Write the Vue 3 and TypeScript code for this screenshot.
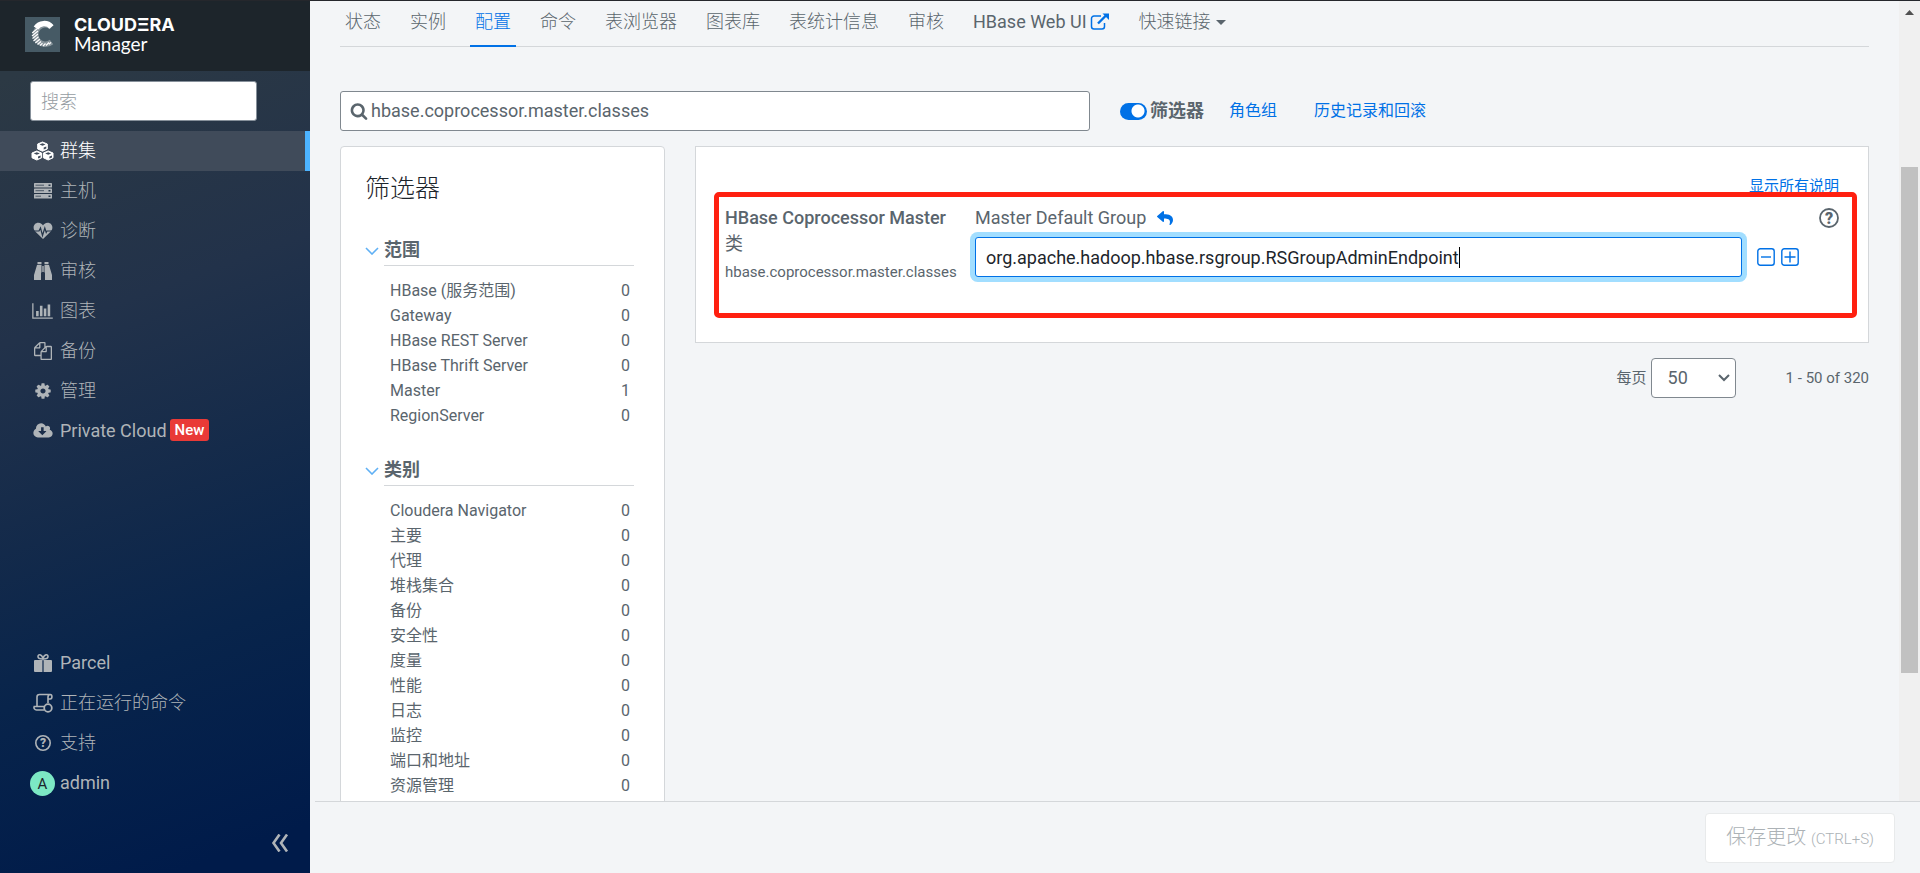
<script setup lang="ts">
import { ref } from 'vue'

interface NavItem {
  label: string
  icon: string
  active?: boolean
  badge?: string
}

interface FilterGroup {
  title: string
  rows: { name: string; count: number }[]
}

const mainNav: NavItem[] = [
  { label: '群集', icon: 'cubes', active: true },
  { label: '主机', icon: 'hosts' },
  { label: '诊断', icon: 'heart' },
  { label: '审核', icon: 'binoculars' },
  { label: '图表', icon: 'chart' },
  { label: '备份', icon: 'copy' },
  { label: '管理', icon: 'cog' },
  { label: 'Private Cloud', icon: 'cloud', badge: 'New' },
]

const footNav: NavItem[] = [
  { label: 'Parcel', icon: 'gift' },
  { label: '正在运行的命令', icon: 'scroll' },
  { label: '支持', icon: 'help' },
  { label: 'admin', icon: 'avatar' },
]

const tabs = ['状态', '实例', '配置', '命令', '表浏览器', '图表库', '表统计信息', '审核']
const activeTab = ref('配置')

const isLatin = (text: string) => /^[A-Za-z]/.test(text)

const zero = (names: string[]) => names.map((name) => ({ name, count: 0 }))

const groups: FilterGroup[] = [
  {
    title: '范围',
    rows: [
      ...zero(['HBase (服务范围)', 'Gateway', 'HBase REST Server', 'HBase Thrift Server']),
      { name: 'Master', count: 1 },
      { name: 'RegionServer', count: 0 },
    ],
  },
  {
    title: '类别',
    rows: zero([
      'Cloudera Navigator', '主要', '代理', '堆栈集合', '备份', '安全性',
      '度量', '性能', '日志', '监控', '端口和地址', '资源管理',
    ]),
  },
]

const navQuery = ref('')
const query = ref('hbase.coprocessor.master.classes')
const filtersOn = ref(true)
const endpoint = ref('org.apache.hadoop.hbase.rsgroup.RSGroupAdminEndpoint')
const perPage = ref('50')
</script>

<template>
  <div class="app">
    <aside class="sidebar">
      <header class="brand">
        <svg class="brand-mark" viewBox="0 0 35 35" aria-hidden="true">
          <rect width="35" height="35" fill="#465a65" />
          <path d="M26.500 10A9.700 9.700 0 1 0 26.500 25" fill="none" stroke="#fff" stroke-width="5.500" opacity=".35" />
          <path d="M26.500 10A9.700 9.700 0 0 0 11 11" fill="none" stroke="#fff" stroke-width="5.500" />
          <path d="M7.200 16l7-6M7 19l6-5M7.500 21.500l5.500-4.500M8.500 24l5-4.200M10.300 26l4.500-3.800M12.500 27.500l3.500-3M15 28.500l2.500-2.300M18 29l2.500-2.500M21 28.500l3-3M24 27.300l2-2" stroke="#fff" stroke-width="1.200" />
        </svg>
        <div class="brand-text">
          <span class="brand-name">CLOUDΞRA</span>
          <span class="brand-product">Manager</span>
        </div>
      </header>

      <div class="nav-search">
        <input v-model="navQuery" type="text" placeholder="搜索" aria-label="搜索" />
      </div>

      <nav class="nav">
        <template v-for="(list, li) in [mainNav, footNav]" :key="li">
          <div v-if="li === 1" class="nav-space"></div>
          <a v-for="item in list" :key="item.label" href="#" class="nav-item" :class="{ active: item.active }">
            <span class="nav-icon">
              <svg v-if="item.icon === 'cubes'" width="23" height="20" viewBox="0 0 23 20">
                <g fill="currentColor" stroke="currentColor" stroke-width="1" stroke-linejoin="round">
                  <path d="M11.500 1l4.800 2v5l-4.800 2.200L6.700 8V3z" />
                  <path d="M5.800 10l4.800 2v4.800l-4.800 2.200L1 16.800V12z" />
                  <path d="M17.200 10l4.800 2v4.800l-4.800 2.200-4.800-2.200V12z" />
                </g>
                <path d="M8.500 3.500l3-1.200 3 1.200-3 1.200zM2.800 12.500l3-1.200 3 1.200-3 1.200zM14.200 12.500l3-1.200 3 1.200-3 1.200zM12.700 6.500l2.600-1.100v2l-2.600 1.200zM7 15.500l2.600-1.100v2L7 17.600zM18.400 15.500l2.600-1.100v2l-2.600 1.200z" fill="#404b5a" />
              </svg>
              <svg v-else-if="item.icon === 'hosts'" width="20" height="16" viewBox="0 0 20 16">
                <g fill="currentColor">
                  <rect x="1" y="0" width="18" height="4.500" rx=".6" />
                  <rect x="1" y="5.500" width="18" height="4.500" rx=".6" />
                  <rect x="1" y="11" width="18" height="4.500" rx=".6" />
                </g>
                <path d="M2.500 2.200H11M2.500 7.700H11M2.500 13.200H8" stroke="#4c5866" stroke-width="1" />
                <path d="M15.500 2.200h2M15.500 7.700h2M15.500 13.200h2" stroke="#26374a" stroke-width="1.500" />
              </svg>
              <svg v-else-if="item.icon === 'heart'" width="20" height="18" viewBox="0 0 20 18">
                <path d="M10 17L2 9.300C-.8 6 .8.8 5.400.8 7.700.8 9.300 2.300 10 3.400 10.700 2.300 12.300.8 14.600.8c4.600 0 6.200 5.200 3.400 8.500z" fill="currentColor" />
                <path d="M1 9h5l1.500-3 2 7.500L11.800 6l1.400 4.500L14 9h5" fill="none" stroke="#24354a" stroke-width="1.200" />
              </svg>
              <svg v-else-if="item.icon === 'binoculars'" width="20" height="20" viewBox="0 0 20 20">
                <path d="M4.500 1h4v2.200h-4zM11.500 1h4v2.200h-4zM4 4h4.500v7.500H8V19H1v-5zM16 4h-4.500v7.500h.5V19h7v-5zM9.300 5h1.400v6H9.300z" fill="currentColor" />
              </svg>
              <svg v-else-if="item.icon === 'chart'" width="21" height="18" viewBox="0 0 2048 1792">
                <path d="M640 896v512h-256v-512h256zm384-512v1024h-256v-1024h256zm1024 1152v128h-2048v-1536h128v1408h1920zm-640-896v768h-256v-768h256zm384-384v1152h-256v-1152h256z" fill="currentColor" />
              </svg>
              <svg v-else-if="item.icon === 'copy'" width="18" height="18" viewBox="0 0 1792 1792">
                <path d="M1696 384q40 0 68 28t28 68v1216q0 40-28 68t-68 28h-960q-40 0-68-28t-28-68v-288h-544q-40 0-68-28t-28-68v-672q0-40 20-88t48-76l408-408q28-28 76-48t88-20h416q40 0 68 28t28 68v328q68-40 128-40h416zm-544 213l-299 299h299v-299zm-640-384l-299 299h299v-299zm196 647l316-316v-416h-384v416q0 40-28 68t-68 28h-416v640h512v-256q0-40 20-88t48-76zm956 804v-1152h-384v416q0 40-28 68t-68 28h-416v640h896z" fill="currentColor" />
              </svg>
              <svg v-else-if="item.icon === 'cog'" width="18" height="18" viewBox="0 0 1792 1792">
                <path d="M1152 896q0-106-75-181t-181-75-181 75-75 181 75 181 181 75 181-75 75-181zm512-109v222q0 12-8 23t-20 13l-185 28q-19 54-39 91 35 50 107 138 10 12 10 25t-9 23q-27 37-99 108t-94 71q-12 0-26-9l-138-108q-44 23-91 38-16 136-29 186-7 28-36 28h-222q-14 0-24.500-8.500t-11.500-21.500l-28-184q-49-16-90-37l-141 107q-10 9-25 9-14 0-25-11-126-114-165-168-7-10-7-23 0-12 8-23 15-21 51-66.500t54-70.500q-27-50-41-99l-183-27q-13-2-21-12.500t-8-23.500v-222q0-12 8-23t19-13l186-28q14-46 39-92-40-57-107-138-10-12-10-24 0-10 9-23 26-36 98.500-107.500t94.500-71.500q13 0 26 10l138 107q44-23 91-38 16-136 29-186 7-28 36-28h222q14 0 24.500 8.500t11.500 21.500l28 184q49 16 90 37l142-107q9-9 24-9 13 0 25 10 129 119 165 170 7 8 7 22 0 12-8 23-15 21-51 66.500t-54 70.500q26 50 41 98l183 28q13 2 21 12.500t8 23.500z" fill="currentColor" />
              </svg>
              <svg v-else-if="item.icon === 'cloud'" width="20" height="18" viewBox="0 0 1920 1792">
                <path d="M1280 928q0-14-9-23t-23-9h-224v-352q0-13-9.500-22.500t-22.500-9.500h-192q-13 0-22.500 9.500t-9.500 22.500v352h-224q-13 0-22.500 9.500t-9.500 22.500q0 14 9 23l352 352q9 9 23 9t23-9l351-351q10-12 10-24zm640 224q0 159-112.500 271.500t-271.500 112.500h-1088q-185 0-316.500-131.500t-131.500-316.500q0-130 70-240t188-165q-2-30-2-43 0-212 150-362t362-150q156 0 285.500 87t188.500 231q71-62 166-62 106 0 181 75t75 181q0 76-41 138 130 31 213.500 135.500t83.500 238.500z" fill="currentColor" />
              </svg>
              <svg v-else-if="item.icon === 'gift'" width="20" height="20" viewBox="0 0 20 20">
                <path d="M1 8a1 1 0 0 1 1-1h7.400v12H2a1 1 0 0 1-1-1zM10.600 7H18a1 1 0 0 1 1 1v10a1 1 0 0 1-1 1h-7.400z" fill="currentColor" />
                <path d="M9.500 6C8 6 5 5.500 5 3.600 5 1 8.500.8 10 5.500 11.500.8 15 1 15 3.600 15 5.500 12 6 10.500 6" fill="none" stroke="currentColor" stroke-width="1.600" />
              </svg>
              <svg v-else-if="item.icon === 'scroll'" width="20" height="20" viewBox="0 0 20 20">
                <path d="M11 17H3.500a2.500 2.500 0 0 1-2.300-3.500H11M4 13.500V4a2.500 2.500 0 0 1 2.500-2.500h10.700c2.300 0 2.300 4.500 0 4.500H15V10M15 6V4a2.500 2.500 0 0 1 2.200-2.500" fill="none" stroke="currentColor" stroke-width="1.600" />
                <circle cx="15" cy="15" r="3.800" fill="none" stroke="currentColor" stroke-width="1.800" />
                <path d="M14 12.500l3.500 2.500-3.500 2.500z" fill="#08234a" />
              </svg>
              <svg v-else-if="item.icon === 'help'" width="18" height="18" viewBox="0 0 18 18">
                <circle cx="9" cy="9" r="7.200" fill="none" stroke="currentColor" stroke-width="1.600" />
                <text x="9" y="13" text-anchor="middle" class="q-small" fill="currentColor">?</text>
              </svg>
              <span v-else class="avatar">A</span>
            </span>
            <span :class="{ thin: !isLatin(item.label) }">{{ item.label }}</span>
            <span v-if="item.badge" class="badge">{{ item.badge }}</span>
          </a>
        </template>
      </nav>

      <button class="collapse" type="button" aria-label="收起">
        <svg width="18" height="18" viewBox="0 0 18 18" fill="none" stroke="currentColor" stroke-width="2.600">
          <path d="M8.500 .5L2.500 9l6 8.500M16 .5L10 9l6 8.500" />
        </svg>
      </button>
    </aside>

    <div class="workspace">
      <div class="viewport">
        <main class="content">
          <nav class="tabs">
            <a
              v-for="tab in tabs"
              :key="tab"
              href="#"
              class="tab thin"
              :class="{ current: tab === activeTab }"
              @click.prevent="activeTab = tab"
            >{{ tab }}</a>
            <a href="#" class="tab">
              HBase Web UI
              <svg class="ext" width="20" height="18" viewBox="0 0 20 18" fill="none" stroke="#0071e6">
                <path d="M11 3H4a2.500 2.500 0 0 0-2.500 2.500v8A2.500 2.500 0 0 0 4 16h8a2.500 2.500 0 0 0 2.500-2.500V10" stroke-width="1.500" />
                <path d="M8 10.500L16 2.500" stroke-width="2.400" />
                <path d="M12.500.5H19V7z" fill="#0071e6" stroke="none" />
              </svg>
            </a>
            <a href="#" class="tab thin">
              快速链接
              <svg class="caret-down" width="10" height="5" viewBox="0 0 10 5"><path d="M0 0h10L5 5z" fill="currentColor" /></svg>
            </a>
          </nav>

          <div class="toolbar">
            <label class="search-box">
              <svg width="18" height="18" viewBox="0 0 1792 1792" aria-label="搜索">
                <path d="M1216 832q0-185-131.500-316.500t-316.500-131.500-316.500 131.500-131.500 316.500 131.500 316.500 316.500 131.500 316.500-131.500 131.500-316.500zm512 832q0 52-38 90t-90 38q-54 0-90-38l-343-342q-179 124-399 124-143 0-273.500-55.500t-225-150-150-225-55.500-273.500 55.500-273.500 150-225 225-150 273.500-55.500 273.500 55.500 225 150 150 225 55.500 273.500q0 220-124 399l343 343q37 37 37 90z" fill="currentColor" />
              </svg>
              <input v-model="query" type="text" />
            </label>
            <label class="switch">
              <input v-model="filtersOn" type="checkbox" />
              <span>筛选器</span>
            </label>
            <a href="#" class="link role">角色组</a>
            <a href="#" class="link">历史记录和回滚</a>
          </div>

          <div class="columns">
            <section class="filters">
              <h2>筛选器</h2>
              <div v-for="group in groups" :key="group.title" class="group">
                <svg class="chev" width="14" height="8" viewBox="0 0 14 8">
                  <path d="M1 1l6 6 6-6" fill="none" stroke="#5fb0f5" stroke-width="1.600" />
                </svg>
                <div class="group-body">
                  <h3>{{ group.title }}</h3>
                  <ul>
                    <li v-for="row in group.rows" :key="row.name">
                      <span>{{ row.name }}</span><span>{{ row.count }}</span>
                    </li>
                  </ul>
                </div>
              </div>
            </section>

            <div class="results">
              <section class="card">
                <div class="card-top"><a href="#" class="show-all">显示所有说明</a></div>
                <div class="setting">
                  <div class="setting-name">
                    <label for="endpoint"><b>HBase Coprocessor Master</b><br />类</label>
                    <small>hbase.coprocessor.master.classes</small>
                  </div>
                  <div class="setting-value">
                    <div class="group-line">
                      <span>Master Default Group</span>
                      <button type="button" class="icon-btn" aria-label="重置">
                        <svg width="16" height="16" viewBox="0 0 512 512">
                          <path d="M8.309 189.836L184.313 37.851C199.719 24.546 224 35.347 224 56.015v80.053c160.629 1.839 288 34.032 288 186.258 0 61.441-39.581 122.309-83.333 154.132-13.653 9.931-33.111-2.533-28.077-18.631 45.344-145.012-21.507-183.510-176.590-185.742V360c0 20.700-24.300 31.453-39.687 18.164l-176.004-152c-11.071-9.562-11.086-26.753 0-36.328z" fill="#0071e6" />
                        </svg>
                      </button>
                    </div>
                    <div class="value-line">
                      <div class="field">
                        <input id="endpoint" v-model="endpoint" type="text" />
                        <span class="text-caret"></span>
                      </div>
                      <button type="button" class="icon-btn" aria-label="删除">
                        <svg width="18" height="18" viewBox="0 0 18 18" fill="none" stroke="#0071e6" stroke-width="1.400">
                          <rect x=".8" y=".8" width="16.400" height="16.400" rx="2.500" /><path d="M4 9h10" />
                        </svg>
                      </button>
                      <button type="button" class="icon-btn" aria-label="添加">
                        <svg width="18" height="18" viewBox="0 0 18 18" fill="none" stroke="#0071e6" stroke-width="1.400">
                          <rect x=".8" y=".8" width="16.400" height="16.400" rx="2.500" /><path d="M3.500 9h11M9 3.500v11" />
                        </svg>
                      </button>
                    </div>
                  </div>
                  <button type="button" class="icon-btn help" aria-label="帮助">
                    <svg width="20" height="20" viewBox="0 0 20 20">
                      <circle cx="10" cy="10" r="9" fill="none" stroke="currentColor" stroke-width="1.800" />
                      <text x="10" y="16" text-anchor="middle" class="q-large" fill="currentColor">?</text>
                    </svg>
                  </button>
                </div>
                <div class="highlight"></div>
              </section>

              <div class="pager">
                <label for="per-page">每页</label>
                <div class="select">
                  <select id="per-page" v-model="perPage">
                    <option>50</option>
                    <option>100</option>
                  </select>
                  <svg width="12" height="8" viewBox="0 0 12 8"><path d="M1 1l5 5 5-5" fill="none" stroke="currentColor" stroke-width="2" /></svg>
                </div>
                <span>1 - 50 of 320</span>
              </div>
            </div>
          </div>
        </main>
        <div class="scrollbar">
          <svg width="9" height="5" viewBox="0 0 9 5"><path d="M0 5h9L4.500 0z" fill="#505050" /></svg>
          <div class="thumb"></div>
        </div>
      </div>

      <footer class="actions">
        <button type="button" disabled>保存更改 <small>(CTRL+S)</small></button>
      </footer>
    </div>
  </div>
</template>

<style>
html,
body {
  overflow: hidden;
}
</style>

<style scoped>
* {
  box-sizing: border-box;
}

.app {
  display: flex;
  height: 100vh;
  border-top: 1px solid #25272c;
  background: #f3f5f7;
  color: #5a656d;
  font-family: Roboto, "Noto Sans CJK SC", sans-serif;
  font-size: 18px;
  line-height: 26px;
}

a {
  color: inherit;
  text-decoration: none;
}

input,
select,
button {
  font: inherit;
  color: inherit;
}

svg {
  flex: none;
}

.thin {
  font-weight: 300;
}

.sidebar {
  display: flex;
  flex: 0 0 310px;
  flex-direction: column;
  background: linear-gradient(160deg, #2c3944 8%, #22324a 35%, #08244b 72%, #001b4a 95%);
  color: #afb4b8;
}

.brand {
  display: flex;
  align-items: flex-start;
  gap: 14px;
  height: 70px;
  padding: 16px 25px;
  background: #1d252b;
  color: #fff;
}

.brand-mark {
  width: 35px;
  height: 35px;
}

.brand-text {
  display: flex;
  flex-direction: column;
}

.brand-name {
  font-family: Inter, sans-serif;
  font-size: 18px;
  font-weight: 700;
  line-height: 15px;
}

.brand-product {
  font-family: Lato, sans-serif;
  font-size: 19px;
  line-height: 24px;
}

.nav-search {
  padding: 10px 53px 10px 30px;
}

.nav-search input {
  width: 100%;
  height: 40px;
  padding: 0 10px;
  border: 1px solid #86909a;
  border-radius: 3px;
  background: #fff;
  color: #5a656d;
}

.nav-search input::placeholder {
  color: #959ca2;
  font-weight: 300;
}

.nav {
  display: flex;
  flex: 1;
  flex-direction: column;
}

.nav-space {
  flex: 1;
}

.nav-item {
  display: flex;
  align-items: center;
  height: 40px;
  padding-left: 30px;
}

.nav-item.active {
  border-right: 5px solid #4cb3ff;
  background: #404b5a;
  color: #fff;
}

.nav-icon {
  display: flex;
  justify-content: center;
  width: 25px;
  margin-right: 5px;
}

.badge {
  margin: 0 0 3px 3px;
  padding: 0 5px;
  border-radius: 3px;
  background: #e93a37;
  color: #fff;
  font-size: 15px;
  font-weight: 500;
  line-height: 22px;
}

.avatar {
  width: 25px;
  height: 25px;
  border-radius: 50%;
  background: #7ce8c4;
  color: #1d252b;
  font-size: 15px;
  line-height: 26px;
  text-align: center;
}

.q-small {
  font-size: 12px;
  font-weight: 900;
}

.q-large {
  font-size: 16px;
  font-weight: 900;
}

.collapse {
  display: grid;
  place-items: center;
  align-self: flex-end;
  width: 60px;
  height: 60px;
  margin: 10px 0 0;
  padding: 0;
  border: 0;
  background: none;
}

.workspace {
  display: flex;
  flex: 1;
  flex-direction: column;
  min-width: 0;
}

.viewport {
  display: flex;
  flex: 1;
  min-height: 0;
  overflow: hidden;
}

.content {
  display: flex;
  flex: 1;
  flex-direction: column;
  min-width: 0;
  padding: 0 30px;
}

.tabs {
  display: flex;
  flex: none;
  gap: 19px;
  height: 46px;
  border-bottom: 1px solid #d4d7da;
}

.tab {
  display: flex;
  align-items: center;
  height: 46px;
  padding: 0 5px 4px;
}

.tab.current {
  padding-bottom: 2px;
  border-bottom: 2px solid #0071e6;
  color: #0071e6;
}

.ext {
  margin-left: 3px;
}

.caret-down {
  margin-left: 5px;
}

.toolbar {
  display: flex;
  flex: none;
  align-items: center;
  margin: 44px 0 15px;
}

.search-box {
  display: flex;
  flex: 0 1 750px;
  align-items: center;
  gap: 3px;
  height: 40px;
  padding: 0 9px;
  border: 1px solid #80888f;
  border-radius: 3px;
  background: #fff;
}

.search-box input {
  flex: 1;
  min-width: 0;
  padding: 0;
  border: 0;
  outline: 0;
  background: none;
}

.switch {
  display: flex;
  align-items: center;
  gap: 3px;
  margin-left: 30px;
  font-weight: 700;
}

.switch input {
  width: 27px;
  height: 17px;
  margin: 0;
  appearance: none;
  border-radius: 9px;
  background: radial-gradient(circle at 18px 8px, #fff 6px, #0071e6 7px);
}

.link {
  margin-left: 37px;
  color: #0071e6;
  font-size: 16px;
}

.link.role {
  margin-left: 25px;
}

.columns {
  display: flex;
  gap: 30px;
  flex: 1;
  min-height: 0;
}

.filters {
  flex: 0 0 325px;
  min-height: 700px;
  padding: 25px 30px 0 24px;
  border: 1px solid #d4d7da;
  border-radius: 4px;
  background: #fff;
}

h2 {
  margin: 0 0 29px;
  color: #1d252b;
  font-size: 25px;
  font-weight: 300;
  line-height: 34px;
}

.group {
  display: flex;
  gap: 5px;
  margin-bottom: 27px;
}

.chev {
  margin-top: 12px;
}

.group-body {
  flex: 1;
}

h3 {
  margin: 0 0 12px;
  border-bottom: 1px solid #d4d7da;
  font-size: 18px;
  font-weight: 700;
  line-height: 30px;
}

ul {
  margin: 0;
  padding: 0 4px 0 6px;
  list-style: none;
  font-size: 16px;
}

li {
  display: flex;
  justify-content: space-between;
  line-height: 25px;
}

.results {
  flex: 1;
  min-width: 0;
}

.card {
  position: relative;
  height: 197px;
  padding: 27px 29px 0 29px;
  border: 1px solid #d4d7da;
  background: #fff;
}

.card-top {
  display: flex;
  justify-content: flex-end;
  line-height: 24px;
}

.show-all {
  color: #0071e6;
  font-size: 15px;
  text-decoration: underline;
}

.setting {
  display: flex;
  align-items: flex-start;
  margin-top: 7px;
}

.setting-name {
  flex: 0 0 250px;
}

.setting-name b {
  font-weight: 500;
}

.setting-name small {
  display: block;
  margin-top: 2px;
  font-size: 15px;
}

.setting-value {
  flex: 1;
  min-width: 0;
}

.group-line,
.value-line {
  display: flex;
  align-items: center;
}

.group-line {
  gap: 11px;
}

.value-line {
  gap: 6px;
  margin-top: 6px;
}

.field {
  position: relative;
  flex: 1;
  margin-right: 9px;
}

.field input {
  display: block;
  width: 100%;
  height: 40px;
  padding: 0 10px;
  border: 1px solid #0071e6;
  border-radius: 3px;
  outline: 0;
  background: #fff;
  box-shadow: 0 0 0 5px #a2deff;
  color: #1d252b;
}

.text-caret {
  position: absolute;
  top: 10px;
  left: 484px;
  width: 1px;
  height: 21px;
  background: #000;
}

.icon-btn {
  display: flex;
  padding: 0;
  border: 0;
  background: none;
}

.help {
  margin: 3px 0 0 20px;
}

.highlight {
  position: absolute;
  inset: 45px 11px 24px 18px;
  border: 5px solid #ff2010;
  border-radius: 5px;
  pointer-events: none;
}

.pager {
  display: flex;
  align-items: center;
  justify-content: flex-end;
  margin-top: 15px;
  font-size: 15px;
}

.select {
  display: grid;
  align-items: center;
  width: 85px;
  margin: 0 50px 0 4px;
}

.select select,
.select svg {
  grid-area: 1 / 1;
}

.select select {
  width: 100%;
  height: 40px;
  padding: 0 16px;
  appearance: none;
  border: 1px solid #80888f;
  border-radius: 4px;
  background: #fff;
  font-size: 18px;
}

.select svg {
  justify-self: end;
  margin-right: 6px;
  pointer-events: none;
}

.scrollbar {
  display: flex;
  flex: 0 0 21px;
  flex-direction: column;
  align-items: center;
  padding-top: 9px;
  background: #f0f0f0;
}

.thumb {
  width: 17px;
  height: 64%;
  margin-top: 152px;
  background: #c1c1c1;
}

.actions {
  display: flex;
  flex: none;
  justify-content: flex-end;
  margin-left: 5px;
  padding: 11px 25px 10px;
  border-top: 1px solid #d4d7da;
}

.actions button {
  height: 50px;
  padding: 0 20px;
  border: 1px solid #e8eaeb;
  border-radius: 4px;
  background: #fff;
  color: #acb2b6;
  font-size: 20px;
  font-weight: 300;
}

.actions small {
  font-size: 15px;
}
</style>
